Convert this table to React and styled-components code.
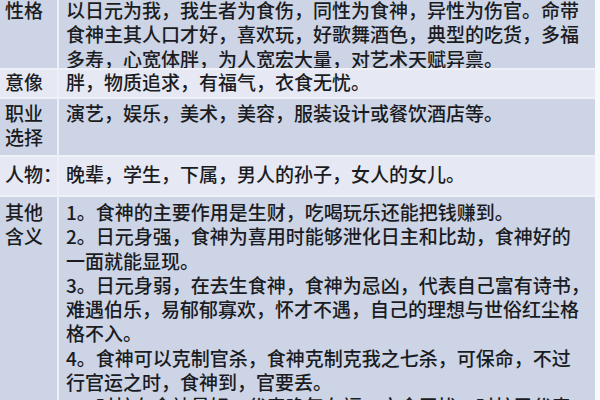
import React from 'react';
import styled, { createGlobalStyle } from 'styled-components';

const GlobalStyle = createGlobalStyle`
  html, body {
    margin: 0;
    padding: 0;
    background: #f8f9fb;
    overflow: hidden;
  }
  body {
    font-family: "Noto Sans CJK SC", "Noto Sans", sans-serif;
  }
`;

const Table = styled.div`
  width: 595px;
  height: 404px;
  margin-top: -4px;
  display: flex;
  flex-direction: column;
  overflow: hidden;
`;

const Row = styled.div`
  display: grid;
  grid-template-columns: 57px 1fr;
  box-sizing: border-box;
  height: ${p => (p.$h ? `${p.$h}px` : 'auto')};
  flex: ${p => (p.$h ? 'none' : '1')};
  background: ${p => (p.$dark ? '#ccd4e6' : '#e6e9f3')};
  border-top: ${p => (p.$first ? 'none' : '2px solid #eef0f7')};
  color: #1b1c22;
  font-size: 19px;
  line-height: 24.3px;
  font-weight: 500;
`;

const Label = styled.div`
  padding: ${p => p.$pt}px 0 0 5px;
  white-space: nowrap;
  overflow: visible;
`;

const Content = styled.div`
  padding: ${p => p.$pt}px 0 0 7px;
  border-left: 2px solid #eef0f7;
  white-space: nowrap;
`;

const rows = [
  {
    label: ['性格'],
    dark: true,
    h: 72,
    pt: 2,
    lines: [
      '以日元为我，我生者为食伤，同性为食神，异性为伤官。命带',
      '食神主其人口才好，喜欢玩，好歌舞酒色，典型的吃货，多福',
      '多寿，心宽体胖，为人宽宏大量，对艺术天赋异禀。',
    ],
  },
  {
    label: ['意像'],
    h: 29,
    pt: 0,
    lines: ['胖，物质追求，有福气，衣食无忧。'],
  },
  {
    label: ['职业', '选择'],
    dark: true,
    h: 58,
    pt: 2,
    lines: ['演艺，娱乐，美术，美容，服装设计或餐饮酒店等。'],
  },
  {
    label: ['人物：'],
    h: 40,
    pt: 5,
    lines: ['晚辈，学生，下属，男人的孙子，女人的女儿。'],
  },
  {
    label: ['其他', '含义'],
    dark: true,
    pt: 3,
    lines: [
      '1。食神的主要作用是生财，吃喝玩乐还能把钱赚到。',
      '2。日元身强，食神为喜用时能够泄化日主和比劫，食神好的',
      '一面就能显现。',
      '3。日元身弱，在去生食神，食神为忌凶，代表自己富有诗书，',
      '难遇伯乐，易郁郁寡欢，怀才不遇，自己的理想与世俗红尘格',
      '格不入。',
      '4。食神可以克制官杀，食神克制克我之七杀，可保命，不过',
      '行官运之时，食神到，官要丢。',
      '5。时柱有食神最好，代表晚年有福，衣食无忧，时柱又代表',
    ],
  },
];

export default function App() {
  return (
    <>
      <GlobalStyle />
      <Table>
        {rows.map((r, i) => (
          <Row key={i} $dark={r.dark} $h={r.h} $first={i === 0}>
            <Label $pt={r.pt}>
              {r.label.map((l, j) => (
                <div key={j}>{l}</div>
              ))}
            </Label>
            <Content $pt={r.pt}>
              {r.lines.map((l, j) => (
                <div key={j}>{l}</div>
              ))}
            </Content>
          </Row>
        ))}
      </Table>
    </>
  );
}
